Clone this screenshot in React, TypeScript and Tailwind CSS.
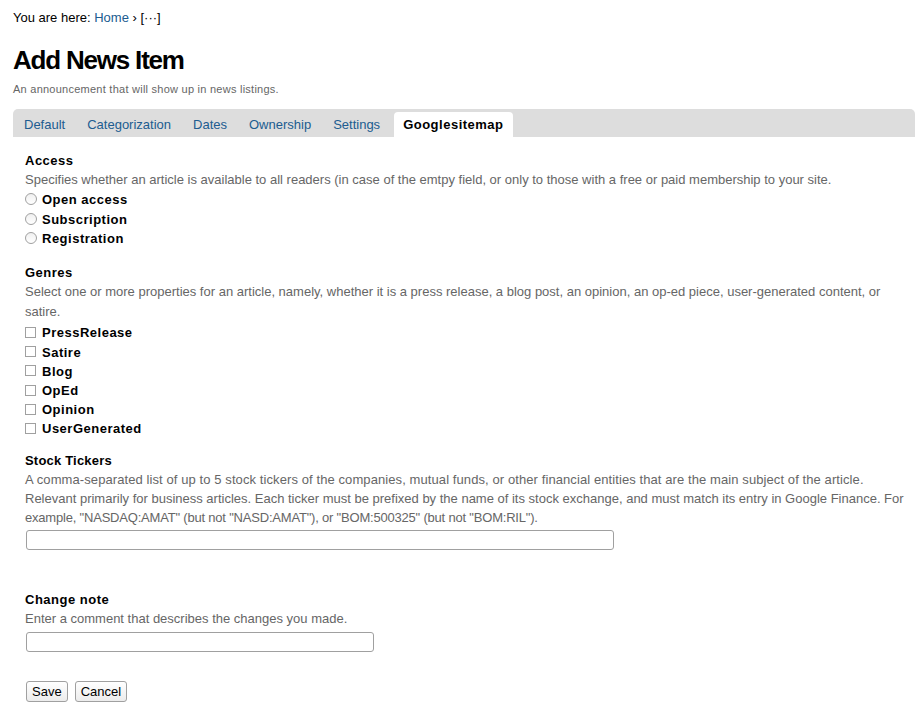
import React from 'react'

const TABS = ['Default', 'Categorization', 'Dates', 'Ownership', 'Settings', 'Googlesitemap']
const GENRES = ['PressRelease', 'Satire', 'Blog', 'OpEd', 'Opinion', 'UserGenerated']
const ACCESS = ['Open access', 'Subscription', 'Registration']

function Radio() {
  return <span className="inline-block w-[12px] h-[12px] rounded-full border border-[#a0a0a0] bg-gradient-to-b from-[#f0f0f0] to-white mr-[5px] mb-[1px] shrink-0" />
}

function Check() {
  return <span className="inline-block w-[11px] h-[11px] border border-[#a0a0a0] bg-white mr-[6px] mb-[1px] shrink-0" />
}

export default function App() {
  return (
    <div className="min-h-[710px] bg-white text-[13px] text-black pl-[13px] pr-[6px] pt-[9px]" style={{ fontFamily: '"Liberation Sans", Arial, sans-serif' }}>
      {/* Breadcrumbs */}
      <div className="leading-[17px]">
        You are here: <a className="text-[#205c90]">Home</a> › [···]
      </div>

      <h1 className="mt-[19px] text-[26px] font-bold leading-[30px] tracking-[-1.2px]">Add News Item</h1>
      <p className="mt-[7px] text-[11px] text-[#666] leading-[14px] tracking-[0.25px]">An announcement that will show up in news listings.</p>

      {/* Tabs */}
      <div className="mt-[13px] bg-[#dddddd] rounded-t-[5px] flex items-end h-[28px]">
        {TABS.map(t =>
          t === 'Googlesitemap' ? (
            <span key={t} className="bg-white rounded-t-[4px] h-[25px] ml-[3px] px-[9px] leading-[26px] font-bold tracking-[0.5px]">{t}</span>
          ) : (
            <span key={t} className="px-[11px] h-[25px] leading-[26px] text-[#205c90]">{t}</span>
          )
        )}
      </div>

      <div className="pl-[12px] pr-[10px] pt-[15px]">
        {/* Access */}
        <div className="font-bold tracking-[0.5px] leading-[18px]">Access</div>
        <div className="text-[#666] leading-[20px]">Specifies whether an article is available to all readers (in case of the emtpy field, or only to those with a free or paid membership to your site.</div>
        <div>
          {ACCESS.map(a => (
            <div key={a} className="flex items-center h-[19.5px] font-bold tracking-[0.5px]"><Radio />{a}</div>
          ))}
        </div>

        {/* Genres */}
        <div className="mt-[14px] font-bold tracking-[0.5px] leading-[19px]">Genres</div>
        <div className="text-[#666] leading-[20px]">Select one or more properties for an article, namely, whether it is a press release, a blog post, an opinion, an op-ed piece, user-generated content, or satire.</div>
        <div className="mt-[2px]">
          {GENRES.map(g => (
            <div key={g} className="flex items-center h-[19.2px] font-bold tracking-[0.5px]"><Check />{g}</div>
          ))}
        </div>

        {/* Stock Tickers */}
        <div className="mt-[13px] font-bold tracking-[0.2px] leading-[18px]">Stock Tickers</div>
        <div className="text-[#666] leading-[19px]">
          <span className="tracking-[0.09px]">A comma-separated list of up to 5 stock tickers of the companies, mutual funds, or other financial entities that are the main subject of the article.</span>
          <br />
          Relevant primarily for business articles. Each ticker must be prefixed by the name of its stock exchange, and must match its entry in Google Finance. For
          <br />
          <span className="tracking-[-0.2px]">example, "NASDAQ:AMAT" (but not "NASD:AMAT"), or "BOM:500325" (but not "BOM:RIL").</span>
        </div>
        <input type="text" className="block mt-[3px] ml-[1px] w-[588px] h-[20px] border border-[#a0a0a0] rounded-[3px] bg-white" />

        {/* Change note */}
        <div className="mt-[41px] font-bold tracking-[0.5px] leading-[18px]">Change note</div>
        <div className="text-[#666] leading-[20px]">Enter a comment that describes the changes you made.</div>
        <input type="text" className="block mt-[3px] ml-[1px] w-[348px] h-[20px] border border-[#a0a0a0] rounded-[3px] bg-white" />

        <div className="mt-[29px] ml-[1px] flex gap-[7px]">
          <button className="h-[21px] px-[5px] border border-[#a0a0a0] rounded-[3px] bg-gradient-to-b from-white to-[#ececec] text-[13px] leading-[19px]">Save</button>
          <button className="h-[21px] px-[5px] border border-[#a0a0a0] rounded-[3px] bg-gradient-to-b from-white to-[#ececec] text-[13px] leading-[19px]">Cancel</button>
        </div>
      </div>
    </div>
  )
}
